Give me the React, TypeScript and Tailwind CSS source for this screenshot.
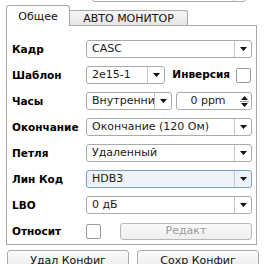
import React from "react";

function Tri({ up = false }: { up?: boolean }) {
  return (
    <svg width="7" height="4" viewBox="0 0 7 4">
      <polygon points={up ? "0,4 7,4 3.5,0" : "0,0 7,0 3.5,4"} fill="#111" />
    </svg>
  );
}

function Combo({ text, w, active = false }: { text: string; w: string; active?: boolean }) {
  return (
    <div
      className={
        "flex h-[18px] shrink-0 items-stretch rounded-[3px] border " +
        w +
        (active ? " border-[#7f9fc6] bg-[#edf2f8]" : " border-[#ababab] bg-white")
      }
    >
      <div className="min-w-0 flex-1 overflow-hidden whitespace-nowrap pl-[5px] text-[11px] leading-[16px] text-[#1a1a1a]">
        {text}
      </div>
      <div className="flex w-[17px] shrink-0 items-center justify-center border-l border-[#c6c6c6]">
        <Tri />
      </div>
    </div>
  );
}

function Check() {
  return <div className="h-[15px] w-[15px] shrink-0 rounded-[2px] border border-[#9c9c9c] bg-white" />;
}

function Row({ label, children }: { label: string; children: React.ReactNode }) {
  return (
    <div className="flex h-[18px] items-center">
      <div className="w-[74px] shrink-0 whitespace-nowrap text-[10.5px] font-bold leading-[18px] text-black">{label}</div>
      <div className="flex w-[166px] items-center">{children}</div>
    </div>
  );
}

export default function App() {
  return (
    <div className="h-[264px] w-[264px] overflow-hidden bg-white font-['DejaVu_Sans',sans-serif]">
      <div className="ml-[92px] mt-[-16px] flex h-[18px] w-[154px] rounded-[3px] border border-[#ababab] bg-white">
        <div className="flex-1" />
        <div className="w-[12px] border-l border-[#c6c6c6]" />
      </div>

      <div className="mt-[3px] flex items-start pl-[6px]">
        <div className="relative z-10 flex h-[21px] w-[64px] justify-center rounded-t-[3px] border border-b-0 border-[#a9a9a9] bg-white pt-[4px] text-[11px] leading-[13px] text-[#111]">
          Общее
        </div>
        <div className="mt-[5px] flex h-[16px] w-[118px] justify-center rounded-tr-[3px] border border-b-0 border-l-0 border-[#a9a9a9] bg-gradient-to-b from-[#f7f7f7] to-[#e4e4e4] pt-[1px] text-[11px] leading-[13px] text-[#111]">
          АВТО МОНИТОР
        </div>
      </div>

      <div className="relative mt-[-1px] ml-[6px] flex h-[220px] w-[251px] flex-col gap-[8px] border border-[#a9a9a9] bg-white pl-[5px] pt-[14px]">
        <Row label="Кадр">
          <Combo text="CASC" w="w-[166px]" />
        </Row>
        <Row label="Шаблон">
          <Combo text="2e15-1" w="w-[79px]" />
          <div className="ml-auto mr-[1px] flex items-center gap-[6px]">
            <span className="text-[10.5px] font-bold text-black">Инверсия</span>
            <Check />
          </div>
        </Row>
        <Row label="Часы">
          <Combo text="Внутренний" w="w-[86px]" />
          <div className="ml-[4px] flex h-[18px] flex-1 items-stretch rounded-[3px] border border-[#ababab] bg-white">
            <div className="flex-1 pl-[2px] text-center text-[11px] leading-[16px] text-[#1a1a1a]">0 ppm</div>
            <div className="flex w-[14px] flex-col items-center justify-center gap-[1px]">
              <Tri up />
              <div className="h-px w-[9px] bg-[#9a9a9a]" />
              <Tri />
            </div>
          </div>
        </Row>
        <Row label="Окончание">
          <Combo text="Окончание (120 Ом)" w="w-[166px]" />
        </Row>
        <Row label="Петля">
          <Combo text="Удаленный" w="w-[166px]" />
        </Row>
        <Row label="Лин Код">
          <Combo text="HDB3" w="w-[166px]" active />
        </Row>
        <Row label="LBO">
          <Combo text="0 дБ" w="w-[166px]" />
        </Row>
        <Row label="Относит">
          <Check />
          <div className="ml-[19px] flex h-[17px] flex-1 items-center justify-center rounded-[3px] border border-[#b8b8b8] bg-gradient-to-b from-[#fafafa] to-[#eeeeee] text-[11px] text-[#9a9a9a]">
            Редакт
          </div>
        </Row>
      </div>

      <div className="mt-[5px] flex gap-[8px] pl-[7px]">
        <div className="flex h-[22px] w-[122px] items-center justify-center rounded-[3px] border border-[#a9a9a9] bg-gradient-to-b from-[#fbfbfb] to-[#e9e9e9] text-[11px] text-[#111]">
          Удал Конфиг
        </div>
        <div className="flex h-[22px] w-[122px] items-center justify-center rounded-[3px] border border-[#a9a9a9] bg-gradient-to-b from-[#fbfbfb] to-[#e9e9e9] text-[11px] text-[#111]">
          Сохр Конфиг
        </div>
      </div>
    </div>
  );
}
